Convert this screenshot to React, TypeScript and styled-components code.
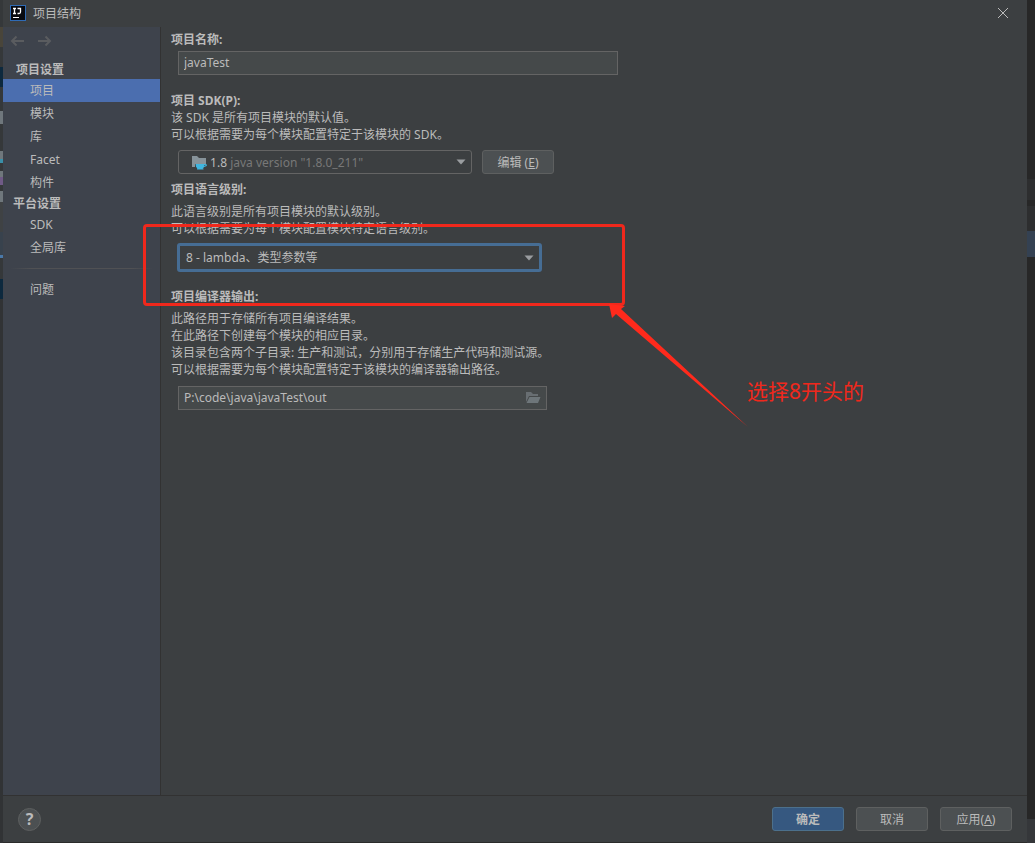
import React from "react";
import styled, { createGlobalStyle, css } from "styled-components";

const GlobalStyle = createGlobalStyle`
  * { box-sizing: border-box; }
  body {
    margin: 0;
    background: #2b2b2b;
    color: #bbbbbb;
    font-family: "Noto Sans", "Noto Sans CJK SC", sans-serif;
    font-size: 12px;
    line-height: 17px;
  }
  button, input, select { font: inherit; color: inherit; margin: 0; }
`;

const Desktop = styled.div`
  display: flex;
  min-height: 100vh;
`;

const EdgeStrip = styled.div<{ $width: number }>`
  display: flex;
  flex-direction: column;
  flex: 0 0 ${(p) => p.$width}px;
`;

const EdgeBlock = styled.div<{ $size?: number; $color: string }>`
  background: ${(p) => p.$color};
  flex: ${(p) => (p.$size ? `0 0 ${p.$size}px` : "1")};
`;

const Dialog = styled.main`
  position: relative;
  flex: 1;
  min-width: 0;
  display: flex;
  flex-direction: column;
  background: #3c3f41;
  border-bottom: 1px solid #2b2b2b;
`;

const TitleBar = styled.header`
  display: flex;
  align-items: center;
  gap: 7px;
  height: 27px;
  padding: 0 16px 1px 7px;
`;

const Title = styled.h1`
  margin: 0;
  flex: 1;
  font-size: 12px;
  font-weight: 400;
`;

const IconButton = styled.button`
  display: flex;
  padding: 0;
  border: 0;
  background: none;
`;

const Body = styled.div`
  display: flex;
  flex: 1;
`;

const Sidebar = styled.nav`
  flex: 0 0 158px;
  background: #3e434c;
  border-right: 1px solid #323232;
`;

const History = styled.div`
  display: flex;
  gap: 12px;
  padding: 7px 7px 0;
  height: 33px;
`;

const GroupTitle = styled.h2<{ $indent: number }>`
  margin: 0;
  padding-left: ${(p) => p.$indent}px;
  font-size: 12px;
  line-height: 19px;
`;

const NavList = styled.ul`
  list-style: none;
  margin: 0;
  padding: 0;
`;

const NavLink = styled.a<{ $active?: boolean }>`
  display: block;
  padding-left: 27px;
  line-height: 23px;
  color: inherit;
  text-decoration: none;
  background: ${(p) => (p.$active ? "#4b6eaf" : "transparent")};
`;

const Divider = styled.hr`
  height: 1px;
  margin: 9px 7px;
  border: 0;
  background: linear-gradient(to right, transparent, #505154 15%, #505154 85%, transparent);
`;

const Content = styled.form`
  flex: 1;
  min-width: 0;
  padding: 4px 10px 20px;
`;

const Section = styled.section<{ $space: number }>`
  margin-bottom: ${(p) => p.$space}px;
`;

const Heading = styled.label<{ $space?: number }>`
  display: block;
  font-weight: 700;
  margin-bottom: ${(p) => p.$space ?? 0}px;
`;

const Hint = styled.p`
  margin: 0;
`;

const FieldRow = styled.div<{ $top: number; $indent?: number }>`
  display: flex;
  gap: 10px;
  margin-top: ${(p) => p.$top}px;
  padding-left: ${(p) => p.$indent ?? 7}px;
`;

const Field = styled.div<{ $width: number }>`
  position: relative;
  flex: 0 1 ${(p) => p.$width}px;
`;

const TextInput = styled.input`
  display: block;
  width: 100%;
  height: 24px;
  padding: 0 5px 1px;
  border: 1px solid #646464;
  background: #45494a;
  outline: none;
`;

const selectBase = css`
  display: block;
  appearance: none;
  width: 100%;
  border-radius: 3px;
  background: #3c3f41;
  outline: none;
`;

const LevelSelect = styled.select`
  ${selectBase}
  height: 29px;
  padding: 0 24px 1px 6px;
  border: 3px solid #466d94;
`;

const SdkSelect = styled.button`
  ${selectBase}
  display: flex;
  align-items: center;
  height: 24px;
  padding: 0 24px 0 12px;
  border: 1px solid #646464;
  white-space: pre;
`;

const Muted = styled.span`
  color: #787878;
`;

const FieldIcon = styled.span<{ $right: number }>`
  position: absolute;
  right: ${(p) => p.$right}px;
  top: 0;
  bottom: 0;
  display: flex;
  align-items: center;
  pointer-events: none;
`;

const Button = styled.button<{ $primary?: boolean }>`
  width: 72px;
  height: 24px;
  padding: 0;
  border: 1px solid ${(p) => (p.$primary ? "#4c708c" : "#5e6060")};
  border-radius: 3px;
  background: ${(p) => (p.$primary ? "#365880" : "#4c5052")};
  font-weight: ${(p) => (p.$primary ? 700 : 400)};
`;

const Footer = styled.footer`
  display: flex;
  align-items: center;
  gap: 12px;
  height: 47px;
  padding: 0 15px;
  border-top: 1px solid #323232;
`;

const HelpButton = styled.button`
  width: 23px;
  height: 23px;
  margin-right: auto;
  padding: 0;
  border: 1px solid #5e6060;
  border-radius: 50%;
  background: #4c5052;
  font-size: 16px;
  font-weight: 700;
`;

const Highlight = styled.div`
  position: absolute;
  left: 140px;
  top: 224px;
  width: 482px;
  height: 82px;
  border: 3px solid #f0281c;
  border-radius: 4px;
  pointer-events: none;
`;

const Arrow = styled.svg`
  position: absolute;
  left: 597px;
  top: 300px;
  pointer-events: none;
`;

const Note = styled.p`
  position: absolute;
  left: 744px;
  top: 376px;
  margin: 0;
  color: #f0281c;
  font-size: 21px;
  line-height: 30px;
`;

const AppLogo = () => (
  <svg width="16" height="16" viewBox="0 0 16 16" aria-hidden="true">
    <rect width="16" height="16" fill="#2f6bb5" />
    <rect x="1" y="1" width="14" height="14" fill="#080a10" />
    <path d="M3 3.5h3M4.5 3.5v5M3 8.5h3M7.500 3.5h3v3.500q0 1.500-1.500 1.500H7.500" fill="none" stroke="#fff" strokeWidth="1.300" />
    <path d="M3 12.500h6" stroke="#fff" strokeWidth="1" />
  </svg>
);

const NavArrow = ({ flip }: { flip?: boolean }) => (
  <svg width="15" height="14" viewBox="0 0 15 14" fill="none" stroke="#5a5c5f" strokeWidth="2" aria-hidden="true">
    <path d={flip ? "M1 7h12M8.500 2.500 13 7l-4.500 4.500" : "M14 7H2M6.500 2.500 2 7l4.500 4.500"} />
  </svg>
);

const Caret = () => (
  <svg width="10" height="6" viewBox="0 0 10 6" aria-hidden="true">
    <path d="M0.500 0.500h9L5 5.500z" fill="#9a9da0" />
  </svg>
);

const SdkIcon = () => (
  <svg width="16" height="16" viewBox="0 0 16 16" aria-hidden="true">
    <path d="M1 2h5l2 2h7v6H4v3H1z" fill="#87939a" />
    <path d="M4.500 10H14q2 0 2 1.300T13 13q-.6 1-1.500 1.500h1V15.500H6v-1h.5Q4.500 13 4.500 10z" fill="#40b6e0" />
    <path d="M13.300 11h1.200q.3.600-1.200 1z" fill="#3c3f41" />
  </svg>
);

const FolderIcon = () => (
  <svg width="16" height="14" viewBox="0 0 16 14" aria-hidden="true">
    <path d="M1 1h5l2 2h5v2H4L1 11z" fill="#686e72" />
    <path d="M4.500 6H15.500L13 12H1.500z" fill="#6e767a" />
  </svg>
);

const projectItems = ["项目", "模块", "库", "Facet", "构件"];
const platformItems = ["SDK", "全局库"];

const NavItems = ({ items, active }: { items: string[]; active?: string }) => (
  <NavList>
    {items.map((item) => (
      <li key={item}>
        <NavLink href="#" $active={item === active}>{item}</NavLink>
      </li>
    ))}
  </NavList>
);

export default function App() {
  return (
    <>
      <GlobalStyle />
      <Desktop>
        <EdgeStrip $width={3}>
          <EdgeBlock $size={27} $color="#35383a" />
          <EdgeBlock $size={20} $color="#49453a" />
          <EdgeBlock $size={20} $color="#35383a" />
          <EdgeBlock $size={20} $color="#0d293e" />
          <EdgeBlock $size={24} $color="#35383a" />
          <EdgeBlock $size={13} $color="#6f777c" />
          <EdgeBlock $size={27} $color="#35383a" />
          <EdgeBlock $size={8} $color="#6f777c" />
          <EdgeBlock $size={4} $color="#3a8fa8" />
          <EdgeBlock $size={8} $color="#35383a" />
          <EdgeBlock $size={6} $color="#6f777c" />
          <EdgeBlock $size={8} $color="#6f5a86" />
          <EdgeBlock $size={6} $color="#35383a" />
          <EdgeBlock $size={11} $color="#6f777c" />
          <EdgeBlock $size={30} $color="#3f4244" />
          <EdgeBlock $size={23} $color="#38424d" />
          <EdgeBlock $size={3} $color="#4a78a8" />
          <EdgeBlock $size={21} $color="#35383a" />
          <EdgeBlock $size={20} $color="#0d293e" />
          <EdgeBlock $color="#313335" />
        </EdgeStrip>
        <Dialog>
          <TitleBar>
            <AppLogo />
            <Title>项目结构</Title>
            <IconButton type="button" aria-label="关闭">
              <svg width="16" height="16" viewBox="0 0 16 16" stroke="#bbbbbb" aria-hidden="true">
                <path d="M3 3l10 10M13 3 3 13" />
              </svg>
            </IconButton>
          </TitleBar>
          <Body>
            <Sidebar>
              <History>
                <IconButton type="button" aria-label="后退"><NavArrow /></IconButton>
                <IconButton type="button" aria-label="前进"><NavArrow flip /></IconButton>
              </History>
              <GroupTitle $indent={13}>项目设置</GroupTitle>
              <NavItems items={projectItems} active="项目" />
              <GroupTitle $indent={10}>平台设置</GroupTitle>
              <NavItems items={platformItems} />
              <Divider />
              <NavItems items={["问题"]} />
            </Sidebar>
            <Content>
              <Section $space={17}>
                <Heading htmlFor="name">项目名称:</Heading>
                <FieldRow $top={3}>
                  <Field $width={440}><TextInput id="name" defaultValue="javaTest" /></Field>
                </FieldRow>
              </Section>
              <Section $space={7}>
                <Heading htmlFor="sdk">项目 SDK(P):</Heading>
                <Hint>该 SDK 是所有项目模块的默认值。</Hint>
                <Hint>可以根据需要为每个模块配置特定于该模块的 SDK。</Hint>
                <FieldRow $top={7}>
                  <Field $width={294}>
                    <SdkSelect id="sdk" type="button">
                      <SdkIcon /> 1.8 <Muted>java version "1.8.0_211"</Muted>
                    </SdkSelect>
                    <FieldIcon $right={6}><Caret /></FieldIcon>
                  </Field>
                  <Button type="button">编辑 (<u>E</u>)</Button>
                </FieldRow>
              </Section>
              <Section $space={16}>
                <Heading htmlFor="level" $space={5}>项目语言级别:</Heading>
                <Hint>此语言级别是所有项目模块的默认级别。</Hint>
                <Hint>可以根据需要为每个模块配置模块特定语言级别。</Hint>
                <FieldRow $top={6} $indent={6}>
                  <Field $width={365}>
                    <LevelSelect id="level"><option>8 - lambda、类型参数等</option></LevelSelect>
                    <FieldIcon $right={8}><Caret /></FieldIcon>
                  </Field>
                </FieldRow>
              </Section>
              <Section $space={0}>
                <Heading htmlFor="output" $space={5}>项目编译器输出:</Heading>
                <Hint>此路径用于存储所有项目编译结果。</Hint>
                <Hint>在此路径下创建每个模块的相应目录。</Hint>
                <Hint>该目录包含两个子目录: 生产和测试，分别用于存储生产代码和测试源。</Hint>
                <Hint>可以根据需要为每个模块配置特定于该模块的编译器输出路径。</Hint>
                <FieldRow $top={8}>
                  <Field $width={369}>
                    <TextInput id="output" defaultValue="P:\code\java\javaTest\out" />
                    <FieldIcon $right={6}><FolderIcon /></FieldIcon>
                  </Field>
                </FieldRow>
              </Section>
            </Content>
          </Body>
          <Footer>
            <HelpButton type="button" aria-label="帮助">?</HelpButton>
            <Button type="button" $primary>确定</Button>
            <Button type="button">取消</Button>
            <Button type="button">应用(<u>A</u>)</Button>
          </Footer>
          <Highlight />
          <Arrow width="150" height="130" viewBox="0 0 150 130" aria-hidden="true">
            <path d="M9 4 25 6l-4 3L148 127 16 14l-4 4z" fill="#ff2a1c" />
          </Arrow>
          <Note>选择8开头的</Note>
        </Dialog>
        <EdgeStrip $width={8}>
          <EdgeBlock $size={179} $color="#272727" />
          <EdgeBlock $size={21} $color="#2d2e2f" />
          <EdgeBlock $size={6} $color="#272727" />
          <EdgeBlock $size={25} $color="#2d2e2f" />
          <EdgeBlock $size={26} $color="#344152" />
          <EdgeBlock $color="#272727" />
          <EdgeBlock $size={24} $color="#35373a" />
        </EdgeStrip>
      </Desktop>
    </>
  );
}
